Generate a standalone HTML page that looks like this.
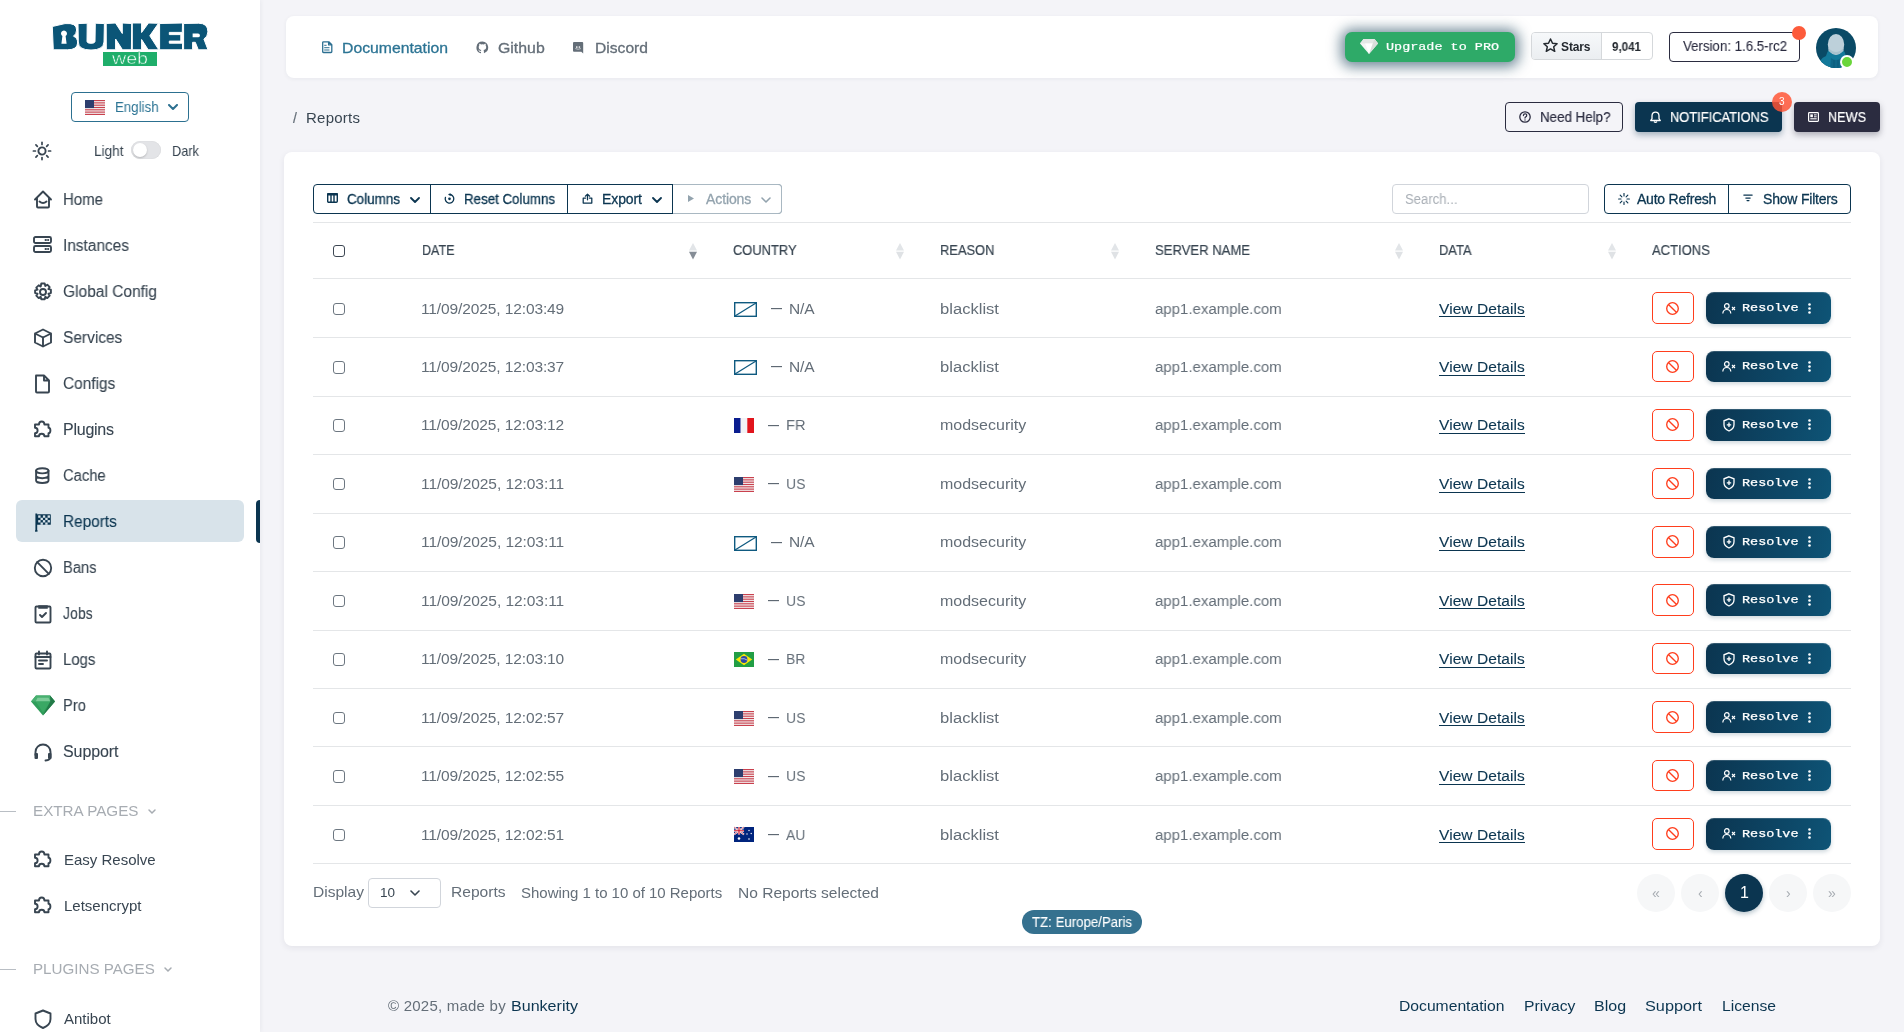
<!DOCTYPE html>
<html><head><meta charset="utf-8"><title>Reports</title>
<style>
html,body{margin:0;padding:0;}
body{width:1904px;height:1032px;overflow:hidden;position:relative;background:#f4f4f8;font-family:"Liberation Sans",sans-serif;}
.t{position:absolute;white-space:nowrap;will-change:transform;}
.r{position:absolute;box-sizing:border-box;}
svg.r{overflow:visible;will-change:transform;}
</style></head><body>
<div class="r" style="left:0px;top:0px;width:260px;height:1032px;background:#fff;box-shadow:1px 0 4px rgba(38,43,67,.06);"></div>
<svg class="r" style="left:52px;top:22px;" width="156" height="28" viewBox="0 0 156 28"><g fill="#0b5577" stroke="#fff" stroke-width="1" stroke-linejoin="round"><path d="M0.3 4.5L13 1.6Q24.8 0.6 24.6 8Q24.4 12.3 21.5 14.2Q25.8 16 25.6 21Q25.3 27.8 15.5 27.8L1.3 27.8Z"/><path d="M26 1.6L35.2 1.2L35 19.5Q35 21.3 39 21.3Q43 21.3 43 19.5L43.3 1.2L52.4 1.6L52 20Q51.5 28 39 28Q26.3 28 26.3 20Z"/><path d="M54.2 1.5L63.5 1L70.3 11.5L70.3 1L79.7 1.5L79.4 27.8L70.5 27.8L63.6 17L63.6 27.8L54.3 27.8Z"/><path d="M80.3 1L89.6 1L89.6 10.5L96.5 1L106.5 1.3L97.8 13.8L106.8 27.8L96.2 27.8L89.6 17.5L89.6 27.8L80.3 27.8Z"/><path d="M107.6 1.5L130.5 1L130.3 10.4L117.3 10.4L117.3 12.6L128.8 12.6L128.8 19.1L117.3 19.1L117.3 21.2L130.5 21.2L130.5 27.8L107.6 27.8Z"/><path d="M131.6 1.5L146.5 1.2Q156 1.2 155.9 9.8Q155.8 14.8 151.9 17L156 27.8L146.3 27.8L143.3 20.3L140.6 20.3L140.6 27.8L131.6 27.8Z"/></g><path d="M9 11.6a3 3 0 1 1 4.6 2.5L14.6 21.8H9.4L10.4 14.1A3 3 0 0 1 9 11.6z" fill="#fff"/><path d="M140.6 11.5L146 11.5A1.9 1.9 0 1 1 146 15.3L140.6 15.3Z" fill="#fff"/></svg>
<div class="r" style="left:103px;top:52px;width:54px;height:14px;background:#1fae6a;"></div>
<svg class="r" style="left:103px;top:52px;" width="54" height="14" viewBox="0 0 54 14"><text x="27" y="12.3" text-anchor="middle" font-family="Liberation Sans" font-size="16" fill="#fff" stroke="#1fae6a" stroke-width=".45" textLength="36" lengthAdjust="spacingAndGlyphs">web</text></svg>
<div class="r" style="left:71px;top:92px;width:118px;height:30px;border:1px solid #2c7090;border-radius:4px;background:#fff;"></div>
<svg class="r" style="left:85px;top:100px;" width="20" height="15" viewBox="0 0 20 15"><rect width="20" height="15" fill="#f4f4f4"/><rect x="0" y="0.000" width="20" height="1.154" fill="#c9414e"/><rect x="0" y="2.308" width="20" height="1.154" fill="#c9414e"/><rect x="0" y="4.615" width="20" height="1.154" fill="#c9414e"/><rect x="0" y="6.923" width="20" height="1.154" fill="#c9414e"/><rect x="0" y="9.231" width="20" height="1.154" fill="#c9414e"/><rect x="0" y="11.538" width="20" height="1.154" fill="#c9414e"/><rect x="0" y="13.846" width="20" height="1.154" fill="#c9414e"/><rect width="9.00" height="8.08" fill="#2d3e6e"/></svg>
<div class="t" style="left:114.50px;top:96.97px;font-size:14px;line-height:20px;color:#2c7494;font-weight:400;font-family:'Liberation Sans', sans-serif;letter-spacing:0.000px;transform:scaleX(0.9477);transform-origin:0 0;">English</div>
<svg class="r" style="left:168px;top:104px;" width="10" height="7" viewBox="0 0 10 7"><path d="M1 1l4 4 4-4" fill="none" stroke="#2c7090" stroke-width="2" stroke-linecap="round" stroke-linejoin="round"/></svg>
<svg class="r" style="left:33px;top:142px;" width="18" height="18" viewBox="0 0 18 18"><circle cx="9" cy="9" r="3.6" fill="none" stroke="#384551" stroke-width="1.9"/><path d="M15.60 9.00L17.60 9.00" stroke="#384551" stroke-width="1.7" stroke-linecap="round"/><path d="M13.67 13.67L15.08 15.08" stroke="#384551" stroke-width="1.7" stroke-linecap="round"/><path d="M9.00 15.60L9.00 17.60" stroke="#384551" stroke-width="1.7" stroke-linecap="round"/><path d="M4.33 13.67L2.92 15.08" stroke="#384551" stroke-width="1.7" stroke-linecap="round"/><path d="M2.40 9.00L0.40 9.00" stroke="#384551" stroke-width="1.7" stroke-linecap="round"/><path d="M4.33 4.33L2.92 2.92" stroke="#384551" stroke-width="1.7" stroke-linecap="round"/><path d="M9.00 2.40L9.00 0.40" stroke="#384551" stroke-width="1.7" stroke-linecap="round"/><path d="M13.67 4.33L15.08 2.92" stroke="#384551" stroke-width="1.7" stroke-linecap="round"/></svg>
<div class="t" style="left:93.50px;top:141.36px;font-size:14.5px;line-height:20px;color:#384551;font-weight:400;font-family:'Liberation Sans', sans-serif;letter-spacing:0.000px;transform:scaleX(0.9380);transform-origin:0 0;">Light</div>
<div class="r" style="left:131px;top:141px;width:30px;height:18px;background:#e3e4e7;border-radius:9px;box-shadow:inset 0 0 1px rgba(0,0,0,.15);"></div>
<div class="r" style="left:133px;top:143px;width:14px;height:14px;background:#fff;border-radius:50%;box-shadow:0 1px 2px rgba(0,0,0,.2);"></div>
<div class="t" style="left:171.50px;top:141.36px;font-size:14.5px;line-height:20px;color:#384551;font-weight:400;font-family:'Liberation Sans', sans-serif;letter-spacing:0.000px;transform:scaleX(0.8809);transform-origin:0 0;">Dark</div>
<div class="r" style="left:16px;top:500px;width:228px;height:42px;background:#d8e3ea;border-radius:6px;"></div>
<div class="r" style="left:256px;top:500px;width:4px;height:43px;background:#0b3550;border-radius:4px 0 0 4px;"></div>
<svg class="r" style="left:33px;top:190.0px;" width="20" height="20" viewBox="0 0 20 20"><path d="M2 9.5L10 1.5 18 9.5M4 8v8.5q0 1 1 1h10q1 0 1-1V8M6.5 11.5q3.5 3 7 0" fill="none" stroke="#384551" stroke-width="1.9" stroke-linecap="round" stroke-linejoin="round"/></svg>
<div class="t" style="left:62.80px;top:188.86px;font-size:16px;line-height:22px;color:#384551;font-weight:400;font-family:'Liberation Sans', sans-serif;letter-spacing:0.000px;transform:scaleX(0.9368);transform-origin:0 0;-webkit-text-stroke:0.10px #384551;">Home</div>
<svg class="r" style="left:33px;top:236.0px;" width="20" height="20" viewBox="0 0 20 20"><rect x="1" y="1" width="17" height="6" rx="1.5" fill="none" stroke="#384551" stroke-width="1.9" stroke-linecap="round" stroke-linejoin="round"/><rect x="1" y="10" width="17" height="6" rx="1.5" fill="none" stroke="#384551" stroke-width="1.9" stroke-linecap="round" stroke-linejoin="round"/><path d="M12.5 4h.5M15 4h.3M12.5 13h.5M15 13h.3" fill="none" stroke="#384551" stroke-width="1.9" stroke-linecap="round" stroke-linejoin="round"/></svg>
<div class="t" style="left:62.80px;top:234.86px;font-size:16px;line-height:22px;color:#384551;font-weight:400;font-family:'Liberation Sans', sans-serif;letter-spacing:0.000px;transform:scaleX(0.9635);transform-origin:0 0;-webkit-text-stroke:0.10px #384551;">Instances</div>
<svg class="r" style="left:33px;top:282.0px;" width="20" height="20" viewBox="0 0 20 20"><circle cx="10" cy="10" r="3" fill="none" stroke="#384551" stroke-width="1.9" stroke-linecap="round" stroke-linejoin="round"/><path d="M8.3 1.5h3.4l.6 2.5 2-1.3 2.4 2.4-1.3 2 2.5.6v3.4l-2.5.6 1.3 2-2.4 2.4-2-1.3-.6 2.5H8.3l-.6-2.5-2 1.3-2.4-2.4 1.3-2-2.5-.6V8.3l2.5-.6-1.3-2 2.4-2.4 2 1.3z" fill="none" stroke="#384551" stroke-width="1.9" stroke-linecap="round" stroke-linejoin="round"/></svg>
<div class="t" style="left:62.80px;top:280.86px;font-size:16px;line-height:22px;color:#384551;font-weight:400;font-family:'Liberation Sans', sans-serif;letter-spacing:0.000px;transform:scaleX(0.9696);transform-origin:0 0;-webkit-text-stroke:0.10px #384551;">Global Config</div>
<svg class="r" style="left:33px;top:328.0px;" width="20" height="20" viewBox="0 0 20 20"><path d="M10 1.5l8 4v9l-8 4-8-4v-9zM2 5.5l8 4 8-4M10 9.5v9" fill="none" stroke="#384551" stroke-width="1.9" stroke-linecap="round" stroke-linejoin="round"/></svg>
<div class="t" style="left:62.80px;top:326.86px;font-size:16px;line-height:22px;color:#384551;font-weight:400;font-family:'Liberation Sans', sans-serif;letter-spacing:0.000px;transform:scaleX(0.9666);transform-origin:0 0;-webkit-text-stroke:0.10px #384551;">Services</div>
<svg class="r" style="left:33px;top:374.0px;" width="20" height="20" viewBox="0 0 20 20"><path d="M3 1.5h8l5 5v11q0 1-1 1H4q-1 0-1-1v-15q0-1 1-1zM11 1.5v5h5" fill="none" stroke="#384551" stroke-width="1.9" stroke-linecap="round" stroke-linejoin="round"/></svg>
<div class="t" style="left:62.80px;top:372.86px;font-size:16px;line-height:22px;color:#384551;font-weight:400;font-family:'Liberation Sans', sans-serif;letter-spacing:0.000px;transform:scaleX(0.9641);transform-origin:0 0;-webkit-text-stroke:0.10px #384551;">Configs</div>
<svg class="r" style="left:33px;top:420.0px;" width="20" height="20" viewBox="0 0 20 20"><path d="M2 4.5H6Q6 1.5 8.7 1.5Q11.4 1.5 11.4 4.5H15.5V7.8Q17.4 7.8 17.4 10.5Q17.4 13.2 15.5 13.2V16.3H11.4Q11.4 13.8 8.7 13.8Q6 13.8 6 16.3H2V13.2Q4.6 13.2 4.6 10.5Q4.6 7.8 2 7.8Z" fill="none" stroke="#384551" stroke-width="1.9" stroke-linecap="round" stroke-linejoin="round"/></svg>
<div class="t" style="left:62.80px;top:418.86px;font-size:16px;line-height:22px;color:#384551;font-weight:400;font-family:'Liberation Sans', sans-serif;letter-spacing:-0.250px;-webkit-text-stroke:0.10px #384551;">Plugins</div>
<svg class="r" style="left:33px;top:466.0px;" width="20" height="20" viewBox="0 0 20 20"><ellipse cx="9.3" cy="4.8" rx="6.2" ry="2.6" fill="none" stroke="#384551" stroke-width="1.9" stroke-linecap="round" stroke-linejoin="round"/><path d="M3.1 4.8v9.6c0 1.4 2.8 2.6 6.2 2.6s6.2-1.2 6.2-2.6V4.8M3.1 9.6c0 1.4 2.8 2.6 6.2 2.6s6.2-1.2 6.2-2.6" fill="none" stroke="#384551" stroke-width="1.9" stroke-linecap="round" stroke-linejoin="round"/></svg>
<div class="t" style="left:62.80px;top:464.86px;font-size:16px;line-height:22px;color:#384551;font-weight:400;font-family:'Liberation Sans', sans-serif;letter-spacing:0.000px;transform:scaleX(0.9232);transform-origin:0 0;-webkit-text-stroke:0.10px #384551;">Cache</div>
<svg class="r" style="left:33px;top:512.0px;" width="20" height="20" viewBox="0 0 20 20"><path d="M3.3 1.5v17.5" stroke="#0b3550" stroke-width="1.8"/><path d="M2 19h2.5" stroke="#0b3550" stroke-width="1.4"/><rect x="4" y="2.2" width="13.8" height="10.6" rx=".6" fill="#0b3550"/><rect x="5.20" y="3.40" width="2.35" height="2.35" fill="#d8e3ea"/><rect x="5.20" y="8.10" width="2.35" height="2.35" fill="#d8e3ea"/><rect x="7.55" y="5.75" width="2.35" height="2.35" fill="#d8e3ea"/><rect x="7.55" y="10.45" width="2.35" height="2.35" fill="#d8e3ea"/><rect x="9.90" y="3.40" width="2.35" height="2.35" fill="#d8e3ea"/><rect x="9.90" y="8.10" width="2.35" height="2.35" fill="#d8e3ea"/><rect x="12.25" y="5.75" width="2.35" height="2.35" fill="#d8e3ea"/><rect x="12.25" y="10.45" width="2.35" height="2.35" fill="#d8e3ea"/><rect x="14.60" y="3.40" width="2.35" height="2.35" fill="#d8e3ea"/><rect x="14.60" y="8.10" width="2.35" height="2.35" fill="#d8e3ea"/></svg>
<div class="t" style="left:62.80px;top:510.86px;font-size:16px;line-height:22px;color:#0b3550;font-weight:400;font-family:'Liberation Sans', sans-serif;letter-spacing:0.000px;transform:scaleX(0.9607);transform-origin:0 0;-webkit-text-stroke:0.10px #0b3550;">Reports</div>
<svg class="r" style="left:33px;top:558.0px;" width="20" height="20" viewBox="0 0 20 20"><circle cx="10" cy="10" r="8.2" fill="none" stroke="#384551" stroke-width="1.9" stroke-linecap="round" stroke-linejoin="round"/><path d="M4.2 4.2l11.6 11.6" fill="none" stroke="#384551" stroke-width="1.9" stroke-linecap="round" stroke-linejoin="round"/></svg>
<div class="t" style="left:62.80px;top:556.86px;font-size:16px;line-height:22px;color:#384551;font-weight:400;font-family:'Liberation Sans', sans-serif;letter-spacing:0.000px;transform:scaleX(0.9191);transform-origin:0 0;-webkit-text-stroke:0.10px #384551;">Bans</div>
<svg class="r" style="left:33px;top:604.0px;" width="20" height="20" viewBox="0 0 20 20"><rect x="2.5" y="2.5" width="15" height="16" rx="1" fill="none" stroke="#384551" stroke-width="1.9" stroke-linecap="round" stroke-linejoin="round"/><path d="M6 2h8v2H6z" fill="#384551" stroke="#384551" stroke-width="1.5"/><path d="M7 11l2 2 4-4" fill="none" stroke="#384551" stroke-width="1.9" stroke-linecap="round" stroke-linejoin="round"/></svg>
<div class="t" style="left:62.80px;top:602.86px;font-size:16px;line-height:22px;color:#384551;font-weight:400;font-family:'Liberation Sans', sans-serif;letter-spacing:0.000px;transform:scaleX(0.8787);transform-origin:0 0;-webkit-text-stroke:0.10px #384551;">Jobs</div>
<svg class="r" style="left:33px;top:650.0px;" width="20" height="20" viewBox="0 0 20 20"><rect x="2.5" y="3.5" width="15" height="15" rx="1" fill="none" stroke="#384551" stroke-width="1.9" stroke-linecap="round" stroke-linejoin="round"/><path d="M6 1.5v3M14 1.5v3M2.5 7h15M6 10.5h8M6 14h4" fill="none" stroke="#384551" stroke-width="1.9" stroke-linecap="round" stroke-linejoin="round"/></svg>
<div class="t" style="left:62.80px;top:648.86px;font-size:16px;line-height:22px;color:#384551;font-weight:400;font-family:'Liberation Sans', sans-serif;letter-spacing:0.000px;transform:scaleX(0.9308);transform-origin:0 0;-webkit-text-stroke:0.10px #384551;">Logs</div>
<svg class="r" style="left:33px;top:696.0px;" width="20" height="20" viewBox="0 0 20 20"><g transform="translate(-2,-0.5)"><path d="M5 0h14l5 6-12 14L0 6z" fill="#2f9d5a"/><path d="M5 0h14l5 6H0z" fill="#48b070"/><path d="M6.5 2.2h11l1.8 3.8H4.7z" fill="#7ccb98"/><path d="M4.7 6h14.6L12 17z" fill="#3aa864"/><path d="M19 0l5 6-12 14 7.3-14z" fill="#237a48"/></g></svg>
<div class="t" style="left:62.80px;top:694.86px;font-size:16px;line-height:22px;color:#384551;font-weight:400;font-family:'Liberation Sans', sans-serif;letter-spacing:0.000px;transform:scaleX(0.9197);transform-origin:0 0;-webkit-text-stroke:0.10px #384551;">Pro</div>
<svg class="r" style="left:33px;top:742.0px;" width="20" height="20" viewBox="0 0 20 20"><path d="M2.5 13v-3a7.5 7.5 0 0 1 15 0v3M17.5 13v2q0 3-5 3.5" fill="none" stroke="#384551" stroke-width="1.9" stroke-linecap="round" stroke-linejoin="round"/><rect x="1.5" y="11" width="3.5" height="6" rx="1" fill="#384551"/><rect x="15" y="11" width="3.5" height="6" rx="1" fill="#384551"/></svg>
<div class="t" style="left:62.80px;top:740.86px;font-size:16px;line-height:22px;color:#384551;font-weight:400;font-family:'Liberation Sans', sans-serif;letter-spacing:-0.092px;-webkit-text-stroke:0.10px #384551;">Support</div>
<div class="r" style="left:0px;top:811px;width:16px;height:1px;background:#b9bec4;"></div>
<div class="t" style="left:32.50px;top:800.86px;font-size:14.5px;line-height:20px;color:#a7acb2;font-weight:400;font-family:'Liberation Sans', sans-serif;letter-spacing:0.000px;transform:scaleX(1.0503);transform-origin:0 0;">EXTRA PAGES</div>
<svg class="r" style="left:147.5px;top:808.9px;" width="8" height="5" viewBox="0 0 8 5"><path d="M1 1l3 3 3-3" fill="none" stroke="#a7acb2" stroke-width="1.5" stroke-linecap="round"/></svg>
<svg class="r" style="left:33px;top:850px;" width="20" height="20" viewBox="0 0 20 20"><path d="M2 4.5H6Q6 1.5 8.7 1.5Q11.4 1.5 11.4 4.5H15.5V7.8Q17.4 7.8 17.4 10.5Q17.4 13.2 15.5 13.2V16.3H11.4Q11.4 13.8 8.7 13.8Q6 13.8 6 16.3H2V13.2Q4.6 13.2 4.6 10.5Q4.6 7.8 2 7.8Z" fill="none" stroke="#384551" stroke-width="1.9" stroke-linecap="round" stroke-linejoin="round"/></svg>
<div class="t" style="left:63.50px;top:849.16px;font-size:15px;line-height:21px;color:#384551;font-weight:400;font-family:'Liberation Sans', sans-serif;letter-spacing:0.000px;">Easy Resolve</div>
<svg class="r" style="left:33px;top:896px;" width="20" height="20" viewBox="0 0 20 20"><path d="M2 4.5H6Q6 1.5 8.7 1.5Q11.4 1.5 11.4 4.5H15.5V7.8Q17.4 7.8 17.4 10.5Q17.4 13.2 15.5 13.2V16.3H11.4Q11.4 13.8 8.7 13.8Q6 13.8 6 16.3H2V13.2Q4.6 13.2 4.6 10.5Q4.6 7.8 2 7.8Z" fill="none" stroke="#384551" stroke-width="1.9" stroke-linecap="round" stroke-linejoin="round"/></svg>
<div class="t" style="left:63.50px;top:895.16px;font-size:15px;line-height:21px;color:#384551;font-weight:400;font-family:'Liberation Sans', sans-serif;letter-spacing:0.000px;">Letsencrypt</div>
<div class="r" style="left:0px;top:969px;width:16px;height:1px;background:#b9bec4;"></div>
<div class="t" style="left:32.50px;top:958.76px;font-size:14.5px;line-height:20px;color:#a7acb2;font-weight:400;font-family:'Liberation Sans', sans-serif;letter-spacing:0.000px;transform:scaleX(1.0450);transform-origin:0 0;">PLUGINS PAGES</div>
<svg class="r" style="left:163.8px;top:966.8px;" width="8" height="5" viewBox="0 0 8 5"><path d="M1 1l3 3 3-3" fill="none" stroke="#a7acb2" stroke-width="1.5" stroke-linecap="round"/></svg>
<svg class="r" style="left:33px;top:1009px;" width="20" height="20" viewBox="0 0 20 20"><path d="M10 1.5l7.5 3v5.5q0 6-7.5 9-7.5-3-7.5-9V4.5z" fill="none" stroke="#384551" stroke-width="1.9" stroke-linecap="round" stroke-linejoin="round"/></svg>
<div class="t" style="left:63.50px;top:1008.06px;font-size:15px;line-height:21px;color:#384551;font-weight:400;font-family:'Liberation Sans', sans-serif;letter-spacing:0.000px;">Antibot</div>
<div class="r" style="left:286px;top:16px;width:1592px;height:62px;background:#fff;border-radius:8px;box-shadow:0 1px 4px rgba(38,43,67,.06);"></div>
<svg class="r" style="left:321.5px;top:41px;" width="10.5" height="12" viewBox="0 0 10.5 12"><path d="M1.5 .8h5.3l3 3v6.9q0 .8-.8.8H1.5q-.8 0-.8-.8V1.6q0-.8.8-.8zM6.6 1v2.9h2.9" fill="none" stroke="#2c6f91" stroke-width="1.3" stroke-linejoin="round"/><path d="M2.6 4.3h1.6M2.6 6.7h4.5M2.6 9h4.5" stroke="#2c6f91" stroke-width="1" stroke-linecap="round"/></svg>
<div class="t" style="left:342.40px;top:37.36px;font-size:15px;line-height:21px;color:#2c7494;font-weight:400;font-family:'Liberation Sans', sans-serif;letter-spacing:0.000px;transform:scaleX(1.0505);transform-origin:0 0;-webkit-text-stroke:0.30px #2c7494;">Documentation</div>
<svg class="r" style="left:476px;top:41px;" width="13" height="13" viewBox="0 0 13 13"><path d="M6.5 0.5a6 6 0 0 0-1.9 11.7c.3 0 .4-.1.4-.3v-1.1c-1.7.4-2-.8-2-.8-.3-.7-.7-.9-.7-.9-.5-.4 0-.4 0-.4.6 0 .9.6.9.6.5.9 1.4.7 1.8.5 0-.4.2-.7.4-.8-1.3-.2-2.7-.7-2.7-3 0-.7.2-1.2.6-1.6 0-.2-.3-.8.1-1.6 0 0 .5-.2 1.6.6a5.7 5.7 0 0 1 3 0c1.1-.8 1.6-.6 1.6-.6.3.8.1 1.4 0 1.6.4.4.6 1 .6 1.6 0 2.3-1.4 2.8-2.7 3 .2.2.4.6.4 1.1v1.7c0 .2.1.4.4.3A6 6 0 0 0 6.5.5z" fill="#646e78"/></svg>
<div class="t" style="left:498.30px;top:37.36px;font-size:15px;line-height:21px;color:#646e78;font-weight:400;font-family:'Liberation Sans', sans-serif;letter-spacing:0.000px;transform:scaleX(1.0566);transform-origin:0 0;-webkit-text-stroke:0.30px #646e78;">Github</div>
<svg class="r" style="left:573.3px;top:42px;" width="10.2" height="11.5" viewBox="0 0 10.2 11.5"><path d="M1 0h8.2q1 0 1 1v10.5L8.3 9.8H1q-1 0-1-1V1q0-1 1-1z" fill="#646e78"/><path d="M2.3 6.6q2.8 1.3 5.6 0" fill="none" stroke="#fff" stroke-width=".6"/><circle cx="3.8" cy="5" r=".85" fill="#fff"/><circle cx="6.4" cy="5" r=".85" fill="#fff"/></svg>
<div class="t" style="left:594.60px;top:37.36px;font-size:15px;line-height:21px;color:#646e78;font-weight:400;font-family:'Liberation Sans', sans-serif;letter-spacing:0.000px;transform:scaleX(1.0423);transform-origin:0 0;-webkit-text-stroke:0.30px #646e78;">Discord</div>
<div class="r" style="left:1345px;top:32px;width:170px;height:30px;background:#2eaa68;border-radius:7px;box-shadow:0 1px 13px 4px rgba(11,53,80,.58);"></div>
<svg class="r" style="left:1360px;top:38px;" width="18" height="17" viewBox="0 0 18 17"><path d="M3.5 1h11L18 5.5 9 16 0 5.5z" fill="#f4f6f5"/><path d="M3.5 1h11L18 5.5H0z" fill="#e4e8e6"/><path d="M5.2 5.5L9 16l3.8-10.5z" fill="#ffffff"/><path d="M14.5 1L18 5.5 9 16l3.8-10.5z" fill="#d9dedb"/></svg>
<div class="t" style="left:1386.00px;top:38.97px;font-size:11.5px;line-height:16px;color:#fff;font-weight:400;font-family:'Liberation Mono', monospace;letter-spacing:0.000px;transform:scaleX(1.1698);transform-origin:0 0;-webkit-text-stroke:0.20px #fff;">Upgrade to PRO</div>
<div class="r" style="left:1531px;top:32px;width:122px;height:28px;border:1px solid #d5d8db;border-radius:4px;background:#fff;"></div>
<div class="r" style="left:1532px;top:33px;width:70px;height:26px;background:linear-gradient(#f6f8fa,#ebeef1);border-radius:3px 0 0 3px;border-right:1px solid #d5d8db;"></div>
<svg class="r" style="left:1542.5px;top:38px;" width="15" height="14.5" viewBox="0 0 15 14.5"><path d="M7.5 1l2 4.2 4.6.5-3.4 3.1 1 4.5-4.2-2.4-4.2 2.4 1-4.5L.9 5.7l4.6-.5z" fill="none" stroke="#24292f" stroke-width="1.5" stroke-linejoin="round"/></svg>
<div class="t" style="left:1561.00px;top:38.87px;font-size:12px;line-height:17px;color:#24292f;font-weight:700;font-family:'Liberation Sans', sans-serif;letter-spacing:-0.125px;">Stars</div>
<div class="t" style="left:1612.00px;top:38.87px;font-size:12px;line-height:17px;color:#24292f;font-weight:700;font-family:'Liberation Sans', sans-serif;letter-spacing:0.000px;transform:scaleX(0.9651);transform-origin:0 0;">9,041</div>
<div class="r" style="left:1669px;top:32px;width:131px;height:30px;border:1.3px solid #2b2c40;border-radius:4px;background:#fff;"></div>
<div class="t" style="left:1682.50px;top:36.27px;font-size:14px;line-height:20px;color:#2b2c40;font-weight:400;font-family:'Liberation Sans', sans-serif;letter-spacing:0.000px;transform:scaleX(0.9480);transform-origin:0 0;-webkit-text-stroke:0.10px #2b2c40;">Version: 1.6.5-rc2</div>
<div class="r" style="left:1792px;top:26px;width:14px;height:14px;background:#fd5b3b;border-radius:50%;"></div>
<svg class="r" style="left:1816px;top:28px;" width="40" height="40" viewBox="0 0 40 40"><defs><clipPath id="av"><circle cx="20" cy="20" r="20"/></clipPath></defs><circle cx="20" cy="20" r="20" fill="#0a4a66"/><g clip-path="url(#av)"><path d="M2 42q0-11 8-14 2-9 10-10 8 1 10 10 8 3 8 14z" fill="#13799a"/><path d="M15 30q5 4 10 0l1 12H14z" fill="#0f6788"/><path d="M18 32v10M22 32v10" stroke="#0b5a78" stroke-width="1"/><ellipse cx="20" cy="16.5" rx="8.2" ry="10.5" fill="#bdd0da"/><path d="M12.5 20q7.5 8 15 0v3q-7.5 7-15 0z" fill="#a9c2ce"/></g></svg>
<div class="r" style="left:1840px;top:55px;width:14px;height:14px;background:#6ad63a;border-radius:50%;border:2.5px solid #fff;"></div>
<div class="t" style="left:292.50px;top:107.77px;font-size:14px;line-height:20px;color:#646e78;font-weight:400;font-family:'Liberation Sans', sans-serif;letter-spacing:0.000px;-webkit-text-stroke:0.20px #646e78;">/</div>
<div class="t" style="left:305.60px;top:107.26px;font-size:15px;line-height:21px;color:#384551;font-weight:400;font-family:'Liberation Sans', sans-serif;letter-spacing:0.250px;">Reports</div>
<div class="r" style="left:1505px;top:102px;width:118px;height:30px;border:1.3px solid #2b2c40;border-radius:4px;background:transparent;"></div>
<svg class="r" style="left:1519px;top:111px;" width="12" height="12" viewBox="0 0 12 12"><circle cx="6" cy="6" r="5.2" fill="none" stroke="#2b2c40" stroke-width="1.3"/><path d="M4.4 4.6q0-1.8 1.7-1.8t1.6 1.6q0 1-1 1.5-.7.3-.7 1.2" fill="none" stroke="#2b2c40" stroke-width="1.2" stroke-linecap="round"/><circle cx="6" cy="9" r=".7" fill="#2b2c40"/></svg>
<div class="t" style="left:1539.60px;top:106.97px;font-size:14px;line-height:20px;color:#2b2c40;font-weight:400;font-family:'Liberation Sans', sans-serif;letter-spacing:0.000px;transform:scaleX(0.9533);transform-origin:0 0;-webkit-text-stroke:0.20px #2b2c40;">Need Help?</div>
<div class="r" style="left:1635px;top:102px;width:147px;height:30px;background:#0b3550;border-radius:4px;box-shadow:0 3px 6px rgba(11,53,80,.35);"></div>
<svg class="r" style="left:1650px;top:111px;" width="11" height="12" viewBox="0 0 11 12"><path d="M5.5 1.2q3.3 0 3.5 3.6v2.8l1.3 1.9H.7L2 7.6V4.8q.2-3.6 3.5-3.6zM4 10.6q1.5 1.6 3 0" fill="none" stroke="#fff" stroke-width="1.3" stroke-linejoin="round"/></svg>
<div class="t" style="left:1669.70px;top:106.97px;font-size:14px;line-height:20px;color:#fff;font-weight:400;font-family:'Liberation Sans', sans-serif;letter-spacing:0.000px;transform:scaleX(0.9201);transform-origin:0 0;-webkit-text-stroke:0.20px #fff;">NOTIFICATIONS</div>
<div class="r" style="left:1772px;top:92px;width:20px;height:20px;background:rgba(255,84,52,.84);border-radius:50%;"></div>
<div class="t" style="left:1779.22px;top:95.47px;font-size:10px;line-height:14px;color:#fff;font-weight:400;font-family:'Liberation Sans', sans-serif;letter-spacing:0.000px;">3</div>
<div class="r" style="left:1794px;top:102px;width:86px;height:30px;background:#2b2c40;border-radius:4px;box-shadow:0 3px 6px rgba(43,44,64,.35);"></div>
<svg class="r" style="left:1808px;top:112px;" width="11" height="10" viewBox="0 0 11 10"><rect x=".6" y=".6" width="9.8" height="8.8" rx=".8" fill="none" stroke="#fff" stroke-width="1.2"/><path d="M2.3 6.8h6.4" stroke="#fff" stroke-width="1.1"/><rect x="2.3" y="2.4" width="2.6" height="2.8" fill="#fff"/><path d="M6 2.9h2.7M6 4.8h2.7" stroke="#fff" stroke-width="1"/></svg>
<div class="t" style="left:1828.40px;top:106.97px;font-size:14px;line-height:20px;color:#fff;font-weight:400;font-family:'Liberation Sans', sans-serif;letter-spacing:0.000px;transform:scaleX(0.9048);transform-origin:0 0;-webkit-text-stroke:0.20px #fff;">NEWS</div>
<div class="r" style="left:284px;top:152px;width:1596px;height:794px;background:#fff;border-radius:8px;box-shadow:0 2px 6px rgba(38,43,67,.08);"></div>
<div class="r" style="left:313px;top:184px;width:469px;height:30px;border:1px solid #0b3550;border-radius:4px;"></div>
<div class="r" style="left:672px;top:184px;width:110px;height:30px;border:1px solid #a9b8c2;border-left:none;border-radius:0 4px 4px 0;background:#fff;"></div>
<div class="r" style="left:430px;top:184px;width:1px;height:30px;background:#0b3550;"></div>
<div class="r" style="left:567px;top:184px;width:1px;height:30px;background:#0b3550;"></div>
<div class="r" style="left:672px;top:184px;width:1px;height:30px;background:#0b3550;"></div>
<svg class="r" style="left:327px;top:193px;" width="11" height="10" viewBox="0 0 11 10"><rect x=".7" y=".7" width="9.6" height="8.6" rx="1" fill="none" stroke="#0b3550" stroke-width="1.4"/><rect x="0" y="0" width="11" height="2.6" rx="1" fill="#0b3550"/><path d="M4 2v7.5M7 2v7.5" stroke="#0b3550" stroke-width="1.4"/></svg>
<div class="t" style="left:347.00px;top:188.97px;font-size:14px;line-height:20px;color:#0b3550;font-weight:400;font-family:'Liberation Sans', sans-serif;letter-spacing:0.000px;transform:scaleX(0.9593);transform-origin:0 0;-webkit-text-stroke:0.30px #0b3550;">Columns</div>
<svg class="r" style="left:410px;top:196.5px;" width="10" height="7" viewBox="0 0 10 7"><path d="M1 1l4 4 4-4" fill="none" stroke="#0b3550" stroke-width="1.8" stroke-linecap="round" stroke-linejoin="round"/></svg>
<svg class="r" style="left:444px;top:193px;" width="11" height="11" viewBox="0 0 11 11"><path d="M5.13 1.52A4.3 4.3 0 1 1 1.46 4.33" fill="none" stroke="#0b3550" stroke-width="1.3" stroke-linecap="round"/><path d="M6.6 .2L4.4 1.6 6.6 3z" fill="#0b3550"/><circle cx="5.5" cy="5.8" r="1.35" fill="#0b3550"/></svg>
<div class="t" style="left:464.40px;top:188.97px;font-size:14px;line-height:20px;color:#0b3550;font-weight:400;font-family:'Liberation Sans', sans-serif;letter-spacing:0.000px;transform:scaleX(0.9509);transform-origin:0 0;-webkit-text-stroke:0.30px #0b3550;">Reset Columns</div>
<svg class="r" style="left:582px;top:193px;" width="11" height="11" viewBox="0 0 11 11"><path d="M5.5 1.2v5.6M3.4 3.2L5.5 1.1 7.6 3.2M3.6 5H1.2v5h8.6V5H7.4" fill="none" stroke="#0b3550" stroke-width="1.25" stroke-linecap="round" stroke-linejoin="round"/></svg>
<div class="t" style="left:601.50px;top:188.97px;font-size:14px;line-height:20px;color:#0b3550;font-weight:400;font-family:'Liberation Sans', sans-serif;letter-spacing:-0.090px;-webkit-text-stroke:0.30px #0b3550;">Export</div>
<svg class="r" style="left:652px;top:196.5px;" width="10" height="7" viewBox="0 0 10 7"><path d="M1 1l4 4 4-4" fill="none" stroke="#0b3550" stroke-width="1.8" stroke-linecap="round" stroke-linejoin="round"/></svg>
<svg class="r" style="left:688px;top:195px;" width="6" height="7" viewBox="0 0 6 7"><path d="M0 0l6 3.5L0 7z" fill="#93a3ae"/></svg>
<div class="t" style="left:706.00px;top:188.97px;font-size:14px;line-height:20px;color:#93a3ae;font-weight:400;font-family:'Liberation Sans', sans-serif;letter-spacing:-0.100px;-webkit-text-stroke:0.30px #93a3ae;">Actions</div>
<svg class="r" style="left:761px;top:196.5px;" width="10" height="7" viewBox="0 0 10 7"><path d="M1 1l4 4 4-4" fill="none" stroke="#93a3ae" stroke-width="1.6" stroke-linecap="round" stroke-linejoin="round"/></svg>
<div class="r" style="left:1392px;top:184px;width:197px;height:30px;border:1px solid #d1d5db;border-radius:4px;background:#fff;"></div>
<div class="t" style="left:1405.00px;top:189.27px;font-size:14px;line-height:20px;color:#a9afb6;font-weight:400;font-family:'Liberation Sans', sans-serif;letter-spacing:0.000px;transform:scaleX(0.9367);transform-origin:0 0;">Search...</div>
<div class="r" style="left:1604px;top:184px;width:247px;height:30px;border:1px solid #0b3550;border-radius:4px;"></div>
<div class="r" style="left:1728px;top:184px;width:1px;height:30px;background:#0b3550;"></div>
<svg class="r" style="left:1618px;top:192.5px;" width="12" height="12" viewBox="0 0 12 12"><path d="M9.00 6.00L11.40 6.00" stroke="#0b3550" stroke-width="1.15" stroke-linecap="round"/><path d="M8.12 8.12L9.82 9.82" stroke="#0b3550" stroke-width="1.15" stroke-linecap="round"/><path d="M6.00 9.00L6.00 11.40" stroke="#0b3550" stroke-width="1.15" stroke-linecap="round"/><path d="M3.88 8.12L2.18 9.82" stroke="#0b3550" stroke-width="1.15" stroke-linecap="round"/><path d="M3.00 6.00L0.60 6.00" stroke="#0b3550" stroke-width="1.15" stroke-linecap="round"/><path d="M3.88 3.88L2.18 2.18" stroke="#0b3550" stroke-width="1.15" stroke-linecap="round"/><path d="M6.00 3.00L6.00 0.60" stroke="#0b3550" stroke-width="1.15" stroke-linecap="round"/><path d="M8.12 3.88L9.82 2.18" stroke="#0b3550" stroke-width="1.15" stroke-linecap="round"/></svg>
<div class="t" style="left:1637.00px;top:188.97px;font-size:14px;line-height:20px;color:#0b3550;font-weight:400;font-family:'Liberation Sans', sans-serif;letter-spacing:-0.218px;-webkit-text-stroke:0.30px #0b3550;">Auto Refresh</div>
<svg class="r" style="left:1743px;top:194px;" width="10" height="8" viewBox="0 0 10 8"><path d="M.8 1.1h8.4M2.8 4.1h4.4M4 6.6h2" stroke="#0b3550" stroke-width="1.1" stroke-linecap="round"/></svg>
<div class="t" style="left:1762.50px;top:188.97px;font-size:14px;line-height:20px;color:#0b3550;font-weight:400;font-family:'Liberation Sans', sans-serif;letter-spacing:-0.200px;-webkit-text-stroke:0.30px #0b3550;">Show Filters</div>
<div class="r" style="left:313px;top:222px;width:1538px;height:1px;background:#e4e6e8;"></div>
<div class="r" style="left:313px;top:278px;width:1538px;height:1px;background:#e4e6e8;"></div>
<div class="r" style="left:332.8px;top:245px;width:12.5px;height:12px;border:1.3px solid #3d4753;border-radius:3px;background:#fff;"></div>
<svg class="r" style="left:689px;top:243.3px;" width="8" height="17" viewBox="0 0 8 17"><path d="M4 0L8 7.5H0z" fill="#e2e5e8"/><path d="M0 8.7H8L4 16.4z" fill="#858d96"/></svg>
<svg class="r" style="left:895.6px;top:243.3px;" width="8" height="17" viewBox="0 0 8 17"><path d="M4 0L8 7.5H0z" fill="#e2e5e8"/><path d="M0 8.7H8L4 16.4z" fill="#dfe2e5"/></svg>
<svg class="r" style="left:1110.6px;top:243.3px;" width="8" height="17" viewBox="0 0 8 17"><path d="M4 0L8 7.5H0z" fill="#e2e5e8"/><path d="M0 8.7H8L4 16.4z" fill="#dfe2e5"/></svg>
<svg class="r" style="left:1395px;top:243.3px;" width="8" height="17" viewBox="0 0 8 17"><path d="M4 0L8 7.5H0z" fill="#e2e5e8"/><path d="M0 8.7H8L4 16.4z" fill="#dfe2e5"/></svg>
<svg class="r" style="left:1607.8px;top:243.3px;" width="8" height="17" viewBox="0 0 8 17"><path d="M4 0L8 7.5H0z" fill="#e2e5e8"/><path d="M0 8.7H8L4 16.4z" fill="#dfe2e5"/></svg>
<div class="t" style="left:421.50px;top:240.27px;font-size:14px;line-height:20px;color:#384551;font-weight:400;font-family:'Liberation Sans', sans-serif;letter-spacing:0.000px;transform:scaleX(0.8953);transform-origin:0 0;-webkit-text-stroke:0.20px #384551;">DATE</div>
<div class="t" style="left:733.00px;top:240.27px;font-size:14px;line-height:20px;color:#384551;font-weight:400;font-family:'Liberation Sans', sans-serif;letter-spacing:0.000px;transform:scaleX(0.9210);transform-origin:0 0;-webkit-text-stroke:0.20px #384551;">COUNTRY</div>
<div class="t" style="left:940.00px;top:240.27px;font-size:14px;line-height:20px;color:#384551;font-weight:400;font-family:'Liberation Sans', sans-serif;letter-spacing:0.000px;transform:scaleX(0.9214);transform-origin:0 0;-webkit-text-stroke:0.20px #384551;">REASON</div>
<div class="t" style="left:1155.00px;top:240.27px;font-size:14px;line-height:20px;color:#384551;font-weight:400;font-family:'Liberation Sans', sans-serif;letter-spacing:0.000px;transform:scaleX(0.9346);transform-origin:0 0;-webkit-text-stroke:0.20px #384551;">SERVER NAME</div>
<div class="t" style="left:1439.00px;top:240.27px;font-size:14px;line-height:20px;color:#384551;font-weight:400;font-family:'Liberation Sans', sans-serif;letter-spacing:0.000px;transform:scaleX(0.9220);transform-origin:0 0;-webkit-text-stroke:0.20px #384551;">DATA</div>
<div class="t" style="left:1652.40px;top:240.27px;font-size:14px;line-height:20px;color:#384551;font-weight:400;font-family:'Liberation Sans', sans-serif;letter-spacing:0.000px;transform:scaleX(0.9285);transform-origin:0 0;-webkit-text-stroke:0.20px #384551;">ACTIONS</div>
<div class="r" style="left:313px;top:337.4px;width:1538px;height:1px;background:#e4e6e8;"></div>
<div class="r" style="left:332.8px;top:302.6px;width:12.5px;height:12.5px;border:1.2px solid #6d7781;border-radius:3px;background:#fff;"></div>
<div class="t" style="left:421.30px;top:297.56px;font-size:15.5px;line-height:22px;color:#646e78;font-weight:400;font-family:'Liberation Sans', sans-serif;letter-spacing:-0.113px;">11/09/2025, 12:03:49</div>
<svg class="r" style="left:734px;top:302.0px;" width="23" height="15" viewBox="0 0 23 15"><rect x=".7" y=".7" width="21.6" height="13.6" fill="#fff" stroke="#0f5a80" stroke-width="1.4"/><path d="M1 14L22 1" stroke="#0f5a80" stroke-width="1.3"/></svg>
<div class="r" style="left:771px;top:308px;width:11px;height:1px;background:#5f6973;box-shadow:0 .5px 0 rgba(100,110,120,.35);"></div>
<div class="t" style="left:788.50px;top:297.56px;font-size:15.5px;line-height:22px;color:#646e78;font-weight:400;font-family:'Liberation Sans', sans-serif;letter-spacing:-0.175px;">N/A</div>
<div class="t" style="left:940.00px;top:297.56px;font-size:15.5px;line-height:22px;color:#646e78;font-weight:400;font-family:'Liberation Sans', sans-serif;letter-spacing:0.000px;transform:scaleX(1.0698);transform-origin:0 0;">blacklist</div>
<div class="t" style="left:1155.00px;top:297.56px;font-size:15.5px;line-height:22px;color:#646e78;font-weight:400;font-family:'Liberation Sans', sans-serif;letter-spacing:0.000px;transform:scaleX(0.9675);transform-origin:0 0;">app1.example.com</div>
<div class="t" style="left:1439.00px;top:297.56px;font-size:15.5px;line-height:22px;color:#0b3550;font-weight:400;font-family:'Liberation Sans', sans-serif;letter-spacing:0.073px;-webkit-text-stroke:0.12px #0b3550;">View Details</div>
<div class="r" style="left:1439px;top:316px;width:86px;height:1px;background:#0b3550;"></div>
<div class="r" style="left:1652px;top:292.2px;width:42px;height:31.6px;border:1px solid #ff3e1d;border-radius:5px;background:#fff;"></div>
<svg class="r" style="left:1665px;top:300.5px;" width="15" height="15" viewBox="0 0 15 15"><circle cx="7.5" cy="7.5" r="5.8" fill="none" stroke="#ff3e1d" stroke-width="1.35"/><path d="M3.4 3.4l8.2 8.2" stroke="#ff3e1d" stroke-width="1.35"/></svg>
<div class="r" style="left:1706px;top:292.2px;width:125px;height:31.6px;background:linear-gradient(100deg,#0b3550 0%,#0d4868 65%,#0e5476 100%);border-radius:8px;box-shadow:0 2px 4px rgba(11,53,80,.2),inset 0 1px 0 rgba(255,255,255,.16);"></div>
<svg class="r" style="left:1722px;top:302.5px;" width="14" height="11" viewBox="0 0 14 11"><circle cx="4.8" cy="3" r="2.3" fill="none" stroke="#fff" stroke-width="1.2"/><path d="M.8 10.5q.3-4 4-4t4 4" fill="none" stroke="#fff" stroke-width="1.2"/><path d="M10 4l3 3M13 4l-3 3" stroke="#fff" stroke-width="1.1"/></svg>
<div class="t" style="left:1741.50px;top:301.04px;font-size:11px;line-height:15px;color:#fff;font-weight:400;font-family:'Liberation Mono', monospace;letter-spacing:0.000px;transform:scaleX(1.2229);transform-origin:0 0;-webkit-text-stroke:0.25px #fff;">Resolve</div>
<svg class="r" style="left:1808px;top:302.5px;" width="3" height="11" viewBox="0 0 3 11"><circle cx="1.5" cy="1.5" r="1.3" fill="#fff"/><circle cx="1.5" cy="5.5" r="1.3" fill="#fff"/><circle cx="1.5" cy="9.5" r="1.3" fill="#fff"/></svg>
<div class="r" style="left:313px;top:395.84px;width:1538px;height:1px;background:#e4e6e8;"></div>
<div class="r" style="left:332.8px;top:361.04px;width:12.5px;height:12.5px;border:1.2px solid #6d7781;border-radius:3px;background:#fff;"></div>
<div class="t" style="left:421.30px;top:356.00px;font-size:15.5px;line-height:22px;color:#646e78;font-weight:400;font-family:'Liberation Sans', sans-serif;letter-spacing:-0.113px;">11/09/2025, 12:03:37</div>
<svg class="r" style="left:734px;top:360.44px;" width="23" height="15" viewBox="0 0 23 15"><rect x=".7" y=".7" width="21.6" height="13.6" fill="#fff" stroke="#0f5a80" stroke-width="1.4"/><path d="M1 14L22 1" stroke="#0f5a80" stroke-width="1.3"/></svg>
<div class="r" style="left:771px;top:366px;width:11px;height:1px;background:#5f6973;box-shadow:0 .5px 0 rgba(100,110,120,.35);"></div>
<div class="t" style="left:788.50px;top:356.00px;font-size:15.5px;line-height:22px;color:#646e78;font-weight:400;font-family:'Liberation Sans', sans-serif;letter-spacing:-0.175px;">N/A</div>
<div class="t" style="left:940.00px;top:356.00px;font-size:15.5px;line-height:22px;color:#646e78;font-weight:400;font-family:'Liberation Sans', sans-serif;letter-spacing:0.000px;transform:scaleX(1.0698);transform-origin:0 0;">blacklist</div>
<div class="t" style="left:1155.00px;top:356.00px;font-size:15.5px;line-height:22px;color:#646e78;font-weight:400;font-family:'Liberation Sans', sans-serif;letter-spacing:0.000px;transform:scaleX(0.9675);transform-origin:0 0;">app1.example.com</div>
<div class="t" style="left:1439.00px;top:356.00px;font-size:15.5px;line-height:22px;color:#0b3550;font-weight:400;font-family:'Liberation Sans', sans-serif;letter-spacing:0.073px;-webkit-text-stroke:0.12px #0b3550;">View Details</div>
<div class="r" style="left:1439px;top:375px;width:86px;height:1px;background:#0b3550;"></div>
<div class="r" style="left:1652px;top:350.64px;width:42px;height:31.6px;border:1px solid #ff3e1d;border-radius:5px;background:#fff;"></div>
<svg class="r" style="left:1665px;top:358.94px;" width="15" height="15" viewBox="0 0 15 15"><circle cx="7.5" cy="7.5" r="5.8" fill="none" stroke="#ff3e1d" stroke-width="1.35"/><path d="M3.4 3.4l8.2 8.2" stroke="#ff3e1d" stroke-width="1.35"/></svg>
<div class="r" style="left:1706px;top:350.64px;width:125px;height:31.6px;background:linear-gradient(100deg,#0b3550 0%,#0d4868 65%,#0e5476 100%);border-radius:8px;box-shadow:0 2px 4px rgba(11,53,80,.2),inset 0 1px 0 rgba(255,255,255,.16);"></div>
<svg class="r" style="left:1722px;top:360.94px;" width="14" height="11" viewBox="0 0 14 11"><circle cx="4.8" cy="3" r="2.3" fill="none" stroke="#fff" stroke-width="1.2"/><path d="M.8 10.5q.3-4 4-4t4 4" fill="none" stroke="#fff" stroke-width="1.2"/><path d="M10 4l3 3M13 4l-3 3" stroke="#fff" stroke-width="1.1"/></svg>
<div class="t" style="left:1741.50px;top:359.48px;font-size:11px;line-height:15px;color:#fff;font-weight:400;font-family:'Liberation Mono', monospace;letter-spacing:0.000px;transform:scaleX(1.2229);transform-origin:0 0;-webkit-text-stroke:0.25px #fff;">Resolve</div>
<svg class="r" style="left:1808px;top:360.94px;" width="3" height="11" viewBox="0 0 3 11"><circle cx="1.5" cy="1.5" r="1.3" fill="#fff"/><circle cx="1.5" cy="5.5" r="1.3" fill="#fff"/><circle cx="1.5" cy="9.5" r="1.3" fill="#fff"/></svg>
<div class="r" style="left:313px;top:454.28px;width:1538px;height:1px;background:#e4e6e8;"></div>
<div class="r" style="left:332.8px;top:419.48px;width:12.5px;height:12.5px;border:1.2px solid #6d7781;border-radius:3px;background:#fff;"></div>
<div class="t" style="left:421.30px;top:414.44px;font-size:15.5px;line-height:22px;color:#646e78;font-weight:400;font-family:'Liberation Sans', sans-serif;letter-spacing:-0.113px;">11/09/2025, 12:03:12</div>
<svg class="r" style="left:734px;top:418.38px;" width="20" height="15" viewBox="0 0 20 15"><rect width="6.7" height="15" fill="#0a1d8f"/><rect x="6.7" width="6.6" height="15" fill="#f2f2f5"/><rect x="13.3" width="6.7" height="15" fill="#e1141c"/></svg>
<div class="r" style="left:768px;top:425px;width:11px;height:1px;background:#5f6973;box-shadow:0 .5px 0 rgba(100,110,120,.35);"></div>
<div class="t" style="left:785.50px;top:414.44px;font-size:15.5px;line-height:22px;color:#646e78;font-weight:400;font-family:'Liberation Sans', sans-serif;letter-spacing:0.000px;transform:scaleX(0.9443);transform-origin:0 0;">FR</div>
<div class="t" style="left:940.00px;top:414.44px;font-size:15.5px;line-height:22px;color:#646e78;font-weight:400;font-family:'Liberation Sans', sans-serif;letter-spacing:0.000px;transform:scaleX(1.0317);transform-origin:0 0;">modsecurity</div>
<div class="t" style="left:1155.00px;top:414.44px;font-size:15.5px;line-height:22px;color:#646e78;font-weight:400;font-family:'Liberation Sans', sans-serif;letter-spacing:0.000px;transform:scaleX(0.9675);transform-origin:0 0;">app1.example.com</div>
<div class="t" style="left:1439.00px;top:414.44px;font-size:15.5px;line-height:22px;color:#0b3550;font-weight:400;font-family:'Liberation Sans', sans-serif;letter-spacing:0.073px;-webkit-text-stroke:0.12px #0b3550;">View Details</div>
<div class="r" style="left:1439px;top:433px;width:86px;height:1px;background:#0b3550;"></div>
<div class="r" style="left:1652px;top:409.08px;width:42px;height:31.6px;border:1px solid #ff3e1d;border-radius:5px;background:#fff;"></div>
<svg class="r" style="left:1665px;top:417.38px;" width="15" height="15" viewBox="0 0 15 15"><circle cx="7.5" cy="7.5" r="5.8" fill="none" stroke="#ff3e1d" stroke-width="1.35"/><path d="M3.4 3.4l8.2 8.2" stroke="#ff3e1d" stroke-width="1.35"/></svg>
<div class="r" style="left:1706px;top:409.08px;width:125px;height:31.6px;background:linear-gradient(100deg,#0b3550 0%,#0d4868 65%,#0e5476 100%);border-radius:8px;box-shadow:0 2px 4px rgba(11,53,80,.2),inset 0 1px 0 rgba(255,255,255,.16);"></div>
<svg class="r" style="left:1723px;top:417.88px;" width="12" height="14" viewBox="0 0 12 14"><path d="M6 .8l5 2v4q0 4-5 6.2Q1 10.8 1 6.8v-4z" fill="none" stroke="#fff" stroke-width="1.3"/><path d="M6 4.5v4.5M3.8 6.8h4.4" stroke="#fff" stroke-width="1.3"/></svg>
<div class="t" style="left:1741.50px;top:417.92px;font-size:11px;line-height:15px;color:#fff;font-weight:400;font-family:'Liberation Mono', monospace;letter-spacing:0.000px;transform:scaleX(1.2229);transform-origin:0 0;-webkit-text-stroke:0.25px #fff;">Resolve</div>
<svg class="r" style="left:1808px;top:419.38px;" width="3" height="11" viewBox="0 0 3 11"><circle cx="1.5" cy="1.5" r="1.3" fill="#fff"/><circle cx="1.5" cy="5.5" r="1.3" fill="#fff"/><circle cx="1.5" cy="9.5" r="1.3" fill="#fff"/></svg>
<div class="r" style="left:313px;top:512.72px;width:1538px;height:1px;background:#e4e6e8;"></div>
<div class="r" style="left:332.8px;top:477.92px;width:12.5px;height:12.5px;border:1.2px solid #6d7781;border-radius:3px;background:#fff;"></div>
<div class="t" style="left:421.30px;top:472.88px;font-size:15.5px;line-height:22px;color:#646e78;font-weight:400;font-family:'Liberation Sans', sans-serif;letter-spacing:-0.053px;">11/09/2025, 12:03:11</div>
<svg class="r" style="left:734px;top:476.82px;" width="20" height="15" viewBox="0 0 20 15"><rect width="20" height="15" fill="#f4f4f4"/><rect x="0" y="0.000" width="20" height="1.154" fill="#c9414e"/><rect x="0" y="2.308" width="20" height="1.154" fill="#c9414e"/><rect x="0" y="4.615" width="20" height="1.154" fill="#c9414e"/><rect x="0" y="6.923" width="20" height="1.154" fill="#c9414e"/><rect x="0" y="9.231" width="20" height="1.154" fill="#c9414e"/><rect x="0" y="11.538" width="20" height="1.154" fill="#c9414e"/><rect x="0" y="13.846" width="20" height="1.154" fill="#c9414e"/><rect width="9.00" height="8.08" fill="#2d3e6e"/></svg>
<div class="r" style="left:768px;top:483px;width:11px;height:1px;background:#5f6973;box-shadow:0 .5px 0 rgba(100,110,120,.35);"></div>
<div class="t" style="left:785.50px;top:472.88px;font-size:15.5px;line-height:22px;color:#646e78;font-weight:400;font-family:'Liberation Sans', sans-serif;letter-spacing:0.000px;transform:scaleX(0.9049);transform-origin:0 0;">US</div>
<div class="t" style="left:940.00px;top:472.88px;font-size:15.5px;line-height:22px;color:#646e78;font-weight:400;font-family:'Liberation Sans', sans-serif;letter-spacing:0.000px;transform:scaleX(1.0317);transform-origin:0 0;">modsecurity</div>
<div class="t" style="left:1155.00px;top:472.88px;font-size:15.5px;line-height:22px;color:#646e78;font-weight:400;font-family:'Liberation Sans', sans-serif;letter-spacing:0.000px;transform:scaleX(0.9675);transform-origin:0 0;">app1.example.com</div>
<div class="t" style="left:1439.00px;top:472.88px;font-size:15.5px;line-height:22px;color:#0b3550;font-weight:400;font-family:'Liberation Sans', sans-serif;letter-spacing:0.073px;-webkit-text-stroke:0.12px #0b3550;">View Details</div>
<div class="r" style="left:1439px;top:492px;width:86px;height:1px;background:#0b3550;"></div>
<div class="r" style="left:1652px;top:467.52px;width:42px;height:31.6px;border:1px solid #ff3e1d;border-radius:5px;background:#fff;"></div>
<svg class="r" style="left:1665px;top:475.82px;" width="15" height="15" viewBox="0 0 15 15"><circle cx="7.5" cy="7.5" r="5.8" fill="none" stroke="#ff3e1d" stroke-width="1.35"/><path d="M3.4 3.4l8.2 8.2" stroke="#ff3e1d" stroke-width="1.35"/></svg>
<div class="r" style="left:1706px;top:467.52px;width:125px;height:31.6px;background:linear-gradient(100deg,#0b3550 0%,#0d4868 65%,#0e5476 100%);border-radius:8px;box-shadow:0 2px 4px rgba(11,53,80,.2),inset 0 1px 0 rgba(255,255,255,.16);"></div>
<svg class="r" style="left:1723px;top:476.32px;" width="12" height="14" viewBox="0 0 12 14"><path d="M6 .8l5 2v4q0 4-5 6.2Q1 10.8 1 6.8v-4z" fill="none" stroke="#fff" stroke-width="1.3"/><path d="M6 4.5v4.5M3.8 6.8h4.4" stroke="#fff" stroke-width="1.3"/></svg>
<div class="t" style="left:1741.50px;top:476.36px;font-size:11px;line-height:15px;color:#fff;font-weight:400;font-family:'Liberation Mono', monospace;letter-spacing:0.000px;transform:scaleX(1.2229);transform-origin:0 0;-webkit-text-stroke:0.25px #fff;">Resolve</div>
<svg class="r" style="left:1808px;top:477.82px;" width="3" height="11" viewBox="0 0 3 11"><circle cx="1.5" cy="1.5" r="1.3" fill="#fff"/><circle cx="1.5" cy="5.5" r="1.3" fill="#fff"/><circle cx="1.5" cy="9.5" r="1.3" fill="#fff"/></svg>
<div class="r" style="left:313px;top:571.16px;width:1538px;height:1px;background:#e4e6e8;"></div>
<div class="r" style="left:332.8px;top:536.36px;width:12.5px;height:12.5px;border:1.2px solid #6d7781;border-radius:3px;background:#fff;"></div>
<div class="t" style="left:421.30px;top:531.32px;font-size:15.5px;line-height:22px;color:#646e78;font-weight:400;font-family:'Liberation Sans', sans-serif;letter-spacing:-0.053px;">11/09/2025, 12:03:11</div>
<svg class="r" style="left:734px;top:535.76px;" width="23" height="15" viewBox="0 0 23 15"><rect x=".7" y=".7" width="21.6" height="13.6" fill="#fff" stroke="#0f5a80" stroke-width="1.4"/><path d="M1 14L22 1" stroke="#0f5a80" stroke-width="1.3"/></svg>
<div class="r" style="left:771px;top:542px;width:11px;height:1px;background:#5f6973;box-shadow:0 .5px 0 rgba(100,110,120,.35);"></div>
<div class="t" style="left:788.50px;top:531.32px;font-size:15.5px;line-height:22px;color:#646e78;font-weight:400;font-family:'Liberation Sans', sans-serif;letter-spacing:-0.175px;">N/A</div>
<div class="t" style="left:940.00px;top:531.32px;font-size:15.5px;line-height:22px;color:#646e78;font-weight:400;font-family:'Liberation Sans', sans-serif;letter-spacing:0.000px;transform:scaleX(1.0317);transform-origin:0 0;">modsecurity</div>
<div class="t" style="left:1155.00px;top:531.32px;font-size:15.5px;line-height:22px;color:#646e78;font-weight:400;font-family:'Liberation Sans', sans-serif;letter-spacing:0.000px;transform:scaleX(0.9675);transform-origin:0 0;">app1.example.com</div>
<div class="t" style="left:1439.00px;top:531.32px;font-size:15.5px;line-height:22px;color:#0b3550;font-weight:400;font-family:'Liberation Sans', sans-serif;letter-spacing:0.073px;-webkit-text-stroke:0.12px #0b3550;">View Details</div>
<div class="r" style="left:1439px;top:550px;width:86px;height:1px;background:#0b3550;"></div>
<div class="r" style="left:1652px;top:525.96px;width:42px;height:31.6px;border:1px solid #ff3e1d;border-radius:5px;background:#fff;"></div>
<svg class="r" style="left:1665px;top:534.26px;" width="15" height="15" viewBox="0 0 15 15"><circle cx="7.5" cy="7.5" r="5.8" fill="none" stroke="#ff3e1d" stroke-width="1.35"/><path d="M3.4 3.4l8.2 8.2" stroke="#ff3e1d" stroke-width="1.35"/></svg>
<div class="r" style="left:1706px;top:525.96px;width:125px;height:31.6px;background:linear-gradient(100deg,#0b3550 0%,#0d4868 65%,#0e5476 100%);border-radius:8px;box-shadow:0 2px 4px rgba(11,53,80,.2),inset 0 1px 0 rgba(255,255,255,.16);"></div>
<svg class="r" style="left:1723px;top:534.76px;" width="12" height="14" viewBox="0 0 12 14"><path d="M6 .8l5 2v4q0 4-5 6.2Q1 10.8 1 6.8v-4z" fill="none" stroke="#fff" stroke-width="1.3"/><path d="M6 4.5v4.5M3.8 6.8h4.4" stroke="#fff" stroke-width="1.3"/></svg>
<div class="t" style="left:1741.50px;top:534.80px;font-size:11px;line-height:15px;color:#fff;font-weight:400;font-family:'Liberation Mono', monospace;letter-spacing:0.000px;transform:scaleX(1.2229);transform-origin:0 0;-webkit-text-stroke:0.25px #fff;">Resolve</div>
<svg class="r" style="left:1808px;top:536.26px;" width="3" height="11" viewBox="0 0 3 11"><circle cx="1.5" cy="1.5" r="1.3" fill="#fff"/><circle cx="1.5" cy="5.5" r="1.3" fill="#fff"/><circle cx="1.5" cy="9.5" r="1.3" fill="#fff"/></svg>
<div class="r" style="left:313px;top:629.5999999999999px;width:1538px;height:1px;background:#e4e6e8;"></div>
<div class="r" style="left:332.8px;top:594.8000000000001px;width:12.5px;height:12.5px;border:1.2px solid #6d7781;border-radius:3px;background:#fff;"></div>
<div class="t" style="left:421.30px;top:589.76px;font-size:15.5px;line-height:22px;color:#646e78;font-weight:400;font-family:'Liberation Sans', sans-serif;letter-spacing:-0.053px;">11/09/2025, 12:03:11</div>
<svg class="r" style="left:734px;top:593.7px;" width="20" height="15" viewBox="0 0 20 15"><rect width="20" height="15" fill="#f4f4f4"/><rect x="0" y="0.000" width="20" height="1.154" fill="#c9414e"/><rect x="0" y="2.308" width="20" height="1.154" fill="#c9414e"/><rect x="0" y="4.615" width="20" height="1.154" fill="#c9414e"/><rect x="0" y="6.923" width="20" height="1.154" fill="#c9414e"/><rect x="0" y="9.231" width="20" height="1.154" fill="#c9414e"/><rect x="0" y="11.538" width="20" height="1.154" fill="#c9414e"/><rect x="0" y="13.846" width="20" height="1.154" fill="#c9414e"/><rect width="9.00" height="8.08" fill="#2d3e6e"/></svg>
<div class="r" style="left:768px;top:600px;width:11px;height:1px;background:#5f6973;box-shadow:0 .5px 0 rgba(100,110,120,.35);"></div>
<div class="t" style="left:785.50px;top:589.76px;font-size:15.5px;line-height:22px;color:#646e78;font-weight:400;font-family:'Liberation Sans', sans-serif;letter-spacing:0.000px;transform:scaleX(0.9049);transform-origin:0 0;">US</div>
<div class="t" style="left:940.00px;top:589.76px;font-size:15.5px;line-height:22px;color:#646e78;font-weight:400;font-family:'Liberation Sans', sans-serif;letter-spacing:0.000px;transform:scaleX(1.0317);transform-origin:0 0;">modsecurity</div>
<div class="t" style="left:1155.00px;top:589.76px;font-size:15.5px;line-height:22px;color:#646e78;font-weight:400;font-family:'Liberation Sans', sans-serif;letter-spacing:0.000px;transform:scaleX(0.9675);transform-origin:0 0;">app1.example.com</div>
<div class="t" style="left:1439.00px;top:589.76px;font-size:15.5px;line-height:22px;color:#0b3550;font-weight:400;font-family:'Liberation Sans', sans-serif;letter-spacing:0.073px;-webkit-text-stroke:0.12px #0b3550;">View Details</div>
<div class="r" style="left:1439px;top:608px;width:86px;height:1px;background:#0b3550;"></div>
<div class="r" style="left:1652px;top:584.4000000000001px;width:42px;height:31.6px;border:1px solid #ff3e1d;border-radius:5px;background:#fff;"></div>
<svg class="r" style="left:1665px;top:592.7px;" width="15" height="15" viewBox="0 0 15 15"><circle cx="7.5" cy="7.5" r="5.8" fill="none" stroke="#ff3e1d" stroke-width="1.35"/><path d="M3.4 3.4l8.2 8.2" stroke="#ff3e1d" stroke-width="1.35"/></svg>
<div class="r" style="left:1706px;top:584.4000000000001px;width:125px;height:31.6px;background:linear-gradient(100deg,#0b3550 0%,#0d4868 65%,#0e5476 100%);border-radius:8px;box-shadow:0 2px 4px rgba(11,53,80,.2),inset 0 1px 0 rgba(255,255,255,.16);"></div>
<svg class="r" style="left:1723px;top:593.2px;" width="12" height="14" viewBox="0 0 12 14"><path d="M6 .8l5 2v4q0 4-5 6.2Q1 10.8 1 6.8v-4z" fill="none" stroke="#fff" stroke-width="1.3"/><path d="M6 4.5v4.5M3.8 6.8h4.4" stroke="#fff" stroke-width="1.3"/></svg>
<div class="t" style="left:1741.50px;top:593.24px;font-size:11px;line-height:15px;color:#fff;font-weight:400;font-family:'Liberation Mono', monospace;letter-spacing:0.000px;transform:scaleX(1.2229);transform-origin:0 0;-webkit-text-stroke:0.25px #fff;">Resolve</div>
<svg class="r" style="left:1808px;top:594.7px;" width="3" height="11" viewBox="0 0 3 11"><circle cx="1.5" cy="1.5" r="1.3" fill="#fff"/><circle cx="1.5" cy="5.5" r="1.3" fill="#fff"/><circle cx="1.5" cy="9.5" r="1.3" fill="#fff"/></svg>
<div class="r" style="left:313px;top:688.04px;width:1538px;height:1px;background:#e4e6e8;"></div>
<div class="r" style="left:332.8px;top:653.24px;width:12.5px;height:12.5px;border:1.2px solid #6d7781;border-radius:3px;background:#fff;"></div>
<div class="t" style="left:421.30px;top:648.20px;font-size:15.5px;line-height:22px;color:#646e78;font-weight:400;font-family:'Liberation Sans', sans-serif;letter-spacing:-0.113px;">11/09/2025, 12:03:10</div>
<svg class="r" style="left:734px;top:652.14px;" width="20" height="15" viewBox="0 0 20 15"><rect width="20" height="15" fill="#229e45"/><path d="M10 1.8L18.2 7.5 10 13.2 1.8 7.5z" fill="#f8e509"/><circle cx="10" cy="7.5" r="3.4" fill="#2b49a3"/><path d="M6.8 6.8q3.5-.8 6.5 1.3" stroke="#fff" stroke-width=".6" fill="none"/></svg>
<div class="r" style="left:768px;top:659px;width:11px;height:1px;background:#5f6973;box-shadow:0 .5px 0 rgba(100,110,120,.35);"></div>
<div class="t" style="left:785.50px;top:648.20px;font-size:15.5px;line-height:22px;color:#646e78;font-weight:400;font-family:'Liberation Sans', sans-serif;letter-spacing:0.000px;transform:scaleX(0.9049);transform-origin:0 0;">BR</div>
<div class="t" style="left:940.00px;top:648.20px;font-size:15.5px;line-height:22px;color:#646e78;font-weight:400;font-family:'Liberation Sans', sans-serif;letter-spacing:0.000px;transform:scaleX(1.0317);transform-origin:0 0;">modsecurity</div>
<div class="t" style="left:1155.00px;top:648.20px;font-size:15.5px;line-height:22px;color:#646e78;font-weight:400;font-family:'Liberation Sans', sans-serif;letter-spacing:0.000px;transform:scaleX(0.9675);transform-origin:0 0;">app1.example.com</div>
<div class="t" style="left:1439.00px;top:648.20px;font-size:15.5px;line-height:22px;color:#0b3550;font-weight:400;font-family:'Liberation Sans', sans-serif;letter-spacing:0.073px;-webkit-text-stroke:0.12px #0b3550;">View Details</div>
<div class="r" style="left:1439px;top:667px;width:86px;height:1px;background:#0b3550;"></div>
<div class="r" style="left:1652px;top:642.84px;width:42px;height:31.6px;border:1px solid #ff3e1d;border-radius:5px;background:#fff;"></div>
<svg class="r" style="left:1665px;top:651.14px;" width="15" height="15" viewBox="0 0 15 15"><circle cx="7.5" cy="7.5" r="5.8" fill="none" stroke="#ff3e1d" stroke-width="1.35"/><path d="M3.4 3.4l8.2 8.2" stroke="#ff3e1d" stroke-width="1.35"/></svg>
<div class="r" style="left:1706px;top:642.84px;width:125px;height:31.6px;background:linear-gradient(100deg,#0b3550 0%,#0d4868 65%,#0e5476 100%);border-radius:8px;box-shadow:0 2px 4px rgba(11,53,80,.2),inset 0 1px 0 rgba(255,255,255,.16);"></div>
<svg class="r" style="left:1723px;top:651.64px;" width="12" height="14" viewBox="0 0 12 14"><path d="M6 .8l5 2v4q0 4-5 6.2Q1 10.8 1 6.8v-4z" fill="none" stroke="#fff" stroke-width="1.3"/><path d="M6 4.5v4.5M3.8 6.8h4.4" stroke="#fff" stroke-width="1.3"/></svg>
<div class="t" style="left:1741.50px;top:651.68px;font-size:11px;line-height:15px;color:#fff;font-weight:400;font-family:'Liberation Mono', monospace;letter-spacing:0.000px;transform:scaleX(1.2229);transform-origin:0 0;-webkit-text-stroke:0.25px #fff;">Resolve</div>
<svg class="r" style="left:1808px;top:653.14px;" width="3" height="11" viewBox="0 0 3 11"><circle cx="1.5" cy="1.5" r="1.3" fill="#fff"/><circle cx="1.5" cy="5.5" r="1.3" fill="#fff"/><circle cx="1.5" cy="9.5" r="1.3" fill="#fff"/></svg>
<div class="r" style="left:313px;top:746.48px;width:1538px;height:1px;background:#e4e6e8;"></div>
<div class="r" style="left:332.8px;top:711.68px;width:12.5px;height:12.5px;border:1.2px solid #6d7781;border-radius:3px;background:#fff;"></div>
<div class="t" style="left:421.30px;top:706.64px;font-size:15.5px;line-height:22px;color:#646e78;font-weight:400;font-family:'Liberation Sans', sans-serif;letter-spacing:-0.113px;">11/09/2025, 12:02:57</div>
<svg class="r" style="left:734px;top:710.5799999999999px;" width="20" height="15" viewBox="0 0 20 15"><rect width="20" height="15" fill="#f4f4f4"/><rect x="0" y="0.000" width="20" height="1.154" fill="#c9414e"/><rect x="0" y="2.308" width="20" height="1.154" fill="#c9414e"/><rect x="0" y="4.615" width="20" height="1.154" fill="#c9414e"/><rect x="0" y="6.923" width="20" height="1.154" fill="#c9414e"/><rect x="0" y="9.231" width="20" height="1.154" fill="#c9414e"/><rect x="0" y="11.538" width="20" height="1.154" fill="#c9414e"/><rect x="0" y="13.846" width="20" height="1.154" fill="#c9414e"/><rect width="9.00" height="8.08" fill="#2d3e6e"/></svg>
<div class="r" style="left:768px;top:717px;width:11px;height:1px;background:#5f6973;box-shadow:0 .5px 0 rgba(100,110,120,.35);"></div>
<div class="t" style="left:785.50px;top:706.64px;font-size:15.5px;line-height:22px;color:#646e78;font-weight:400;font-family:'Liberation Sans', sans-serif;letter-spacing:0.000px;transform:scaleX(0.9049);transform-origin:0 0;">US</div>
<div class="t" style="left:940.00px;top:706.64px;font-size:15.5px;line-height:22px;color:#646e78;font-weight:400;font-family:'Liberation Sans', sans-serif;letter-spacing:0.000px;transform:scaleX(1.0698);transform-origin:0 0;">blacklist</div>
<div class="t" style="left:1155.00px;top:706.64px;font-size:15.5px;line-height:22px;color:#646e78;font-weight:400;font-family:'Liberation Sans', sans-serif;letter-spacing:0.000px;transform:scaleX(0.9675);transform-origin:0 0;">app1.example.com</div>
<div class="t" style="left:1439.00px;top:706.64px;font-size:15.5px;line-height:22px;color:#0b3550;font-weight:400;font-family:'Liberation Sans', sans-serif;letter-spacing:0.073px;-webkit-text-stroke:0.12px #0b3550;">View Details</div>
<div class="r" style="left:1439px;top:725px;width:86px;height:1px;background:#0b3550;"></div>
<div class="r" style="left:1652px;top:701.28px;width:42px;height:31.6px;border:1px solid #ff3e1d;border-radius:5px;background:#fff;"></div>
<svg class="r" style="left:1665px;top:709.5799999999999px;" width="15" height="15" viewBox="0 0 15 15"><circle cx="7.5" cy="7.5" r="5.8" fill="none" stroke="#ff3e1d" stroke-width="1.35"/><path d="M3.4 3.4l8.2 8.2" stroke="#ff3e1d" stroke-width="1.35"/></svg>
<div class="r" style="left:1706px;top:701.28px;width:125px;height:31.6px;background:linear-gradient(100deg,#0b3550 0%,#0d4868 65%,#0e5476 100%);border-radius:8px;box-shadow:0 2px 4px rgba(11,53,80,.2),inset 0 1px 0 rgba(255,255,255,.16);"></div>
<svg class="r" style="left:1722px;top:711.5799999999999px;" width="14" height="11" viewBox="0 0 14 11"><circle cx="4.8" cy="3" r="2.3" fill="none" stroke="#fff" stroke-width="1.2"/><path d="M.8 10.5q.3-4 4-4t4 4" fill="none" stroke="#fff" stroke-width="1.2"/><path d="M10 4l3 3M13 4l-3 3" stroke="#fff" stroke-width="1.1"/></svg>
<div class="t" style="left:1741.50px;top:710.12px;font-size:11px;line-height:15px;color:#fff;font-weight:400;font-family:'Liberation Mono', monospace;letter-spacing:0.000px;transform:scaleX(1.2229);transform-origin:0 0;-webkit-text-stroke:0.25px #fff;">Resolve</div>
<svg class="r" style="left:1808px;top:711.5799999999999px;" width="3" height="11" viewBox="0 0 3 11"><circle cx="1.5" cy="1.5" r="1.3" fill="#fff"/><circle cx="1.5" cy="5.5" r="1.3" fill="#fff"/><circle cx="1.5" cy="9.5" r="1.3" fill="#fff"/></svg>
<div class="r" style="left:313px;top:804.92px;width:1538px;height:1px;background:#e4e6e8;"></div>
<div class="r" style="left:332.8px;top:770.12px;width:12.5px;height:12.5px;border:1.2px solid #6d7781;border-radius:3px;background:#fff;"></div>
<div class="t" style="left:421.30px;top:765.08px;font-size:15.5px;line-height:22px;color:#646e78;font-weight:400;font-family:'Liberation Sans', sans-serif;letter-spacing:-0.113px;">11/09/2025, 12:02:55</div>
<svg class="r" style="left:734px;top:769.02px;" width="20" height="15" viewBox="0 0 20 15"><rect width="20" height="15" fill="#f4f4f4"/><rect x="0" y="0.000" width="20" height="1.154" fill="#c9414e"/><rect x="0" y="2.308" width="20" height="1.154" fill="#c9414e"/><rect x="0" y="4.615" width="20" height="1.154" fill="#c9414e"/><rect x="0" y="6.923" width="20" height="1.154" fill="#c9414e"/><rect x="0" y="9.231" width="20" height="1.154" fill="#c9414e"/><rect x="0" y="11.538" width="20" height="1.154" fill="#c9414e"/><rect x="0" y="13.846" width="20" height="1.154" fill="#c9414e"/><rect width="9.00" height="8.08" fill="#2d3e6e"/></svg>
<div class="r" style="left:768px;top:776px;width:11px;height:1px;background:#5f6973;box-shadow:0 .5px 0 rgba(100,110,120,.35);"></div>
<div class="t" style="left:785.50px;top:765.08px;font-size:15.5px;line-height:22px;color:#646e78;font-weight:400;font-family:'Liberation Sans', sans-serif;letter-spacing:0.000px;transform:scaleX(0.9049);transform-origin:0 0;">US</div>
<div class="t" style="left:940.00px;top:765.08px;font-size:15.5px;line-height:22px;color:#646e78;font-weight:400;font-family:'Liberation Sans', sans-serif;letter-spacing:0.000px;transform:scaleX(1.0698);transform-origin:0 0;">blacklist</div>
<div class="t" style="left:1155.00px;top:765.08px;font-size:15.5px;line-height:22px;color:#646e78;font-weight:400;font-family:'Liberation Sans', sans-serif;letter-spacing:0.000px;transform:scaleX(0.9675);transform-origin:0 0;">app1.example.com</div>
<div class="t" style="left:1439.00px;top:765.08px;font-size:15.5px;line-height:22px;color:#0b3550;font-weight:400;font-family:'Liberation Sans', sans-serif;letter-spacing:0.073px;-webkit-text-stroke:0.12px #0b3550;">View Details</div>
<div class="r" style="left:1439px;top:784px;width:86px;height:1px;background:#0b3550;"></div>
<div class="r" style="left:1652px;top:759.72px;width:42px;height:31.6px;border:1px solid #ff3e1d;border-radius:5px;background:#fff;"></div>
<svg class="r" style="left:1665px;top:768.02px;" width="15" height="15" viewBox="0 0 15 15"><circle cx="7.5" cy="7.5" r="5.8" fill="none" stroke="#ff3e1d" stroke-width="1.35"/><path d="M3.4 3.4l8.2 8.2" stroke="#ff3e1d" stroke-width="1.35"/></svg>
<div class="r" style="left:1706px;top:759.72px;width:125px;height:31.6px;background:linear-gradient(100deg,#0b3550 0%,#0d4868 65%,#0e5476 100%);border-radius:8px;box-shadow:0 2px 4px rgba(11,53,80,.2),inset 0 1px 0 rgba(255,255,255,.16);"></div>
<svg class="r" style="left:1722px;top:770.02px;" width="14" height="11" viewBox="0 0 14 11"><circle cx="4.8" cy="3" r="2.3" fill="none" stroke="#fff" stroke-width="1.2"/><path d="M.8 10.5q.3-4 4-4t4 4" fill="none" stroke="#fff" stroke-width="1.2"/><path d="M10 4l3 3M13 4l-3 3" stroke="#fff" stroke-width="1.1"/></svg>
<div class="t" style="left:1741.50px;top:768.56px;font-size:11px;line-height:15px;color:#fff;font-weight:400;font-family:'Liberation Mono', monospace;letter-spacing:0.000px;transform:scaleX(1.2229);transform-origin:0 0;-webkit-text-stroke:0.25px #fff;">Resolve</div>
<svg class="r" style="left:1808px;top:770.02px;" width="3" height="11" viewBox="0 0 3 11"><circle cx="1.5" cy="1.5" r="1.3" fill="#fff"/><circle cx="1.5" cy="5.5" r="1.3" fill="#fff"/><circle cx="1.5" cy="9.5" r="1.3" fill="#fff"/></svg>
<div class="r" style="left:313px;top:863.36px;width:1538px;height:1px;background:#e4e6e8;"></div>
<div class="r" style="left:332.8px;top:828.5600000000001px;width:12.5px;height:12.5px;border:1.2px solid #6d7781;border-radius:3px;background:#fff;"></div>
<div class="t" style="left:421.30px;top:823.52px;font-size:15.5px;line-height:22px;color:#646e78;font-weight:400;font-family:'Liberation Sans', sans-serif;letter-spacing:-0.113px;">11/09/2025, 12:02:51</div>
<svg class="r" style="left:734px;top:827.46px;" width="20" height="15" viewBox="0 0 20 15"><rect width="20" height="15" fill="#00247d"/><path d="M0 0L10 7.5M10 0L0 7.5" stroke="#fff" stroke-width="1.6"/><path d="M0 0L10 7.5M10 0L0 7.5" stroke="#cf142b" stroke-width=".6"/><path d="M5 0v7.5M0 3.75h10" stroke="#fff" stroke-width="2.2"/><path d="M5 0v7.5M0 3.75h10" stroke="#cf142b" stroke-width="1.2"/><circle cx="5" cy="11.5" r="1.3" fill="#fff"/><circle cx="15" cy="3.5" r=".7" fill="#fff"/><circle cx="13" cy="7" r=".7" fill="#fff"/><circle cx="17.2" cy="6.5" r=".7" fill="#fff"/><circle cx="15" cy="12" r=".8" fill="#fff"/></svg>
<div class="r" style="left:768px;top:834px;width:11px;height:1px;background:#5f6973;box-shadow:0 .5px 0 rgba(100,110,120,.35);"></div>
<div class="t" style="left:785.50px;top:823.52px;font-size:15.5px;line-height:22px;color:#646e78;font-weight:400;font-family:'Liberation Sans', sans-serif;letter-spacing:0.000px;transform:scaleX(0.9049);transform-origin:0 0;">AU</div>
<div class="t" style="left:940.00px;top:823.52px;font-size:15.5px;line-height:22px;color:#646e78;font-weight:400;font-family:'Liberation Sans', sans-serif;letter-spacing:0.000px;transform:scaleX(1.0698);transform-origin:0 0;">blacklist</div>
<div class="t" style="left:1155.00px;top:823.52px;font-size:15.5px;line-height:22px;color:#646e78;font-weight:400;font-family:'Liberation Sans', sans-serif;letter-spacing:0.000px;transform:scaleX(0.9675);transform-origin:0 0;">app1.example.com</div>
<div class="t" style="left:1439.00px;top:823.52px;font-size:15.5px;line-height:22px;color:#0b3550;font-weight:400;font-family:'Liberation Sans', sans-serif;letter-spacing:0.073px;-webkit-text-stroke:0.12px #0b3550;">View Details</div>
<div class="r" style="left:1439px;top:842px;width:86px;height:1px;background:#0b3550;"></div>
<div class="r" style="left:1652px;top:818.1600000000001px;width:42px;height:31.6px;border:1px solid #ff3e1d;border-radius:5px;background:#fff;"></div>
<svg class="r" style="left:1665px;top:826.46px;" width="15" height="15" viewBox="0 0 15 15"><circle cx="7.5" cy="7.5" r="5.8" fill="none" stroke="#ff3e1d" stroke-width="1.35"/><path d="M3.4 3.4l8.2 8.2" stroke="#ff3e1d" stroke-width="1.35"/></svg>
<div class="r" style="left:1706px;top:818.1600000000001px;width:125px;height:31.6px;background:linear-gradient(100deg,#0b3550 0%,#0d4868 65%,#0e5476 100%);border-radius:8px;box-shadow:0 2px 4px rgba(11,53,80,.2),inset 0 1px 0 rgba(255,255,255,.16);"></div>
<svg class="r" style="left:1722px;top:828.46px;" width="14" height="11" viewBox="0 0 14 11"><circle cx="4.8" cy="3" r="2.3" fill="none" stroke="#fff" stroke-width="1.2"/><path d="M.8 10.5q.3-4 4-4t4 4" fill="none" stroke="#fff" stroke-width="1.2"/><path d="M10 4l3 3M13 4l-3 3" stroke="#fff" stroke-width="1.1"/></svg>
<div class="t" style="left:1741.50px;top:827.00px;font-size:11px;line-height:15px;color:#fff;font-weight:400;font-family:'Liberation Mono', monospace;letter-spacing:0.000px;transform:scaleX(1.2229);transform-origin:0 0;-webkit-text-stroke:0.25px #fff;">Resolve</div>
<svg class="r" style="left:1808px;top:828.46px;" width="3" height="11" viewBox="0 0 3 11"><circle cx="1.5" cy="1.5" r="1.3" fill="#fff"/><circle cx="1.5" cy="5.5" r="1.3" fill="#fff"/><circle cx="1.5" cy="9.5" r="1.3" fill="#fff"/></svg>
<div class="t" style="left:313.00px;top:881.46px;font-size:15px;line-height:21px;color:#646e78;font-weight:400;font-family:'Liberation Sans', sans-serif;letter-spacing:0.000px;transform:scaleX(1.0366);transform-origin:0 0;">Display</div>
<div class="r" style="left:368px;top:878px;width:73px;height:30px;border:1px solid #d1d5db;border-radius:4px;background:#fff;"></div>
<div class="t" style="left:380.00px;top:883.47px;font-size:13.5px;line-height:19px;color:#384551;font-weight:400;font-family:'Liberation Sans', sans-serif;letter-spacing:0.000px;">10</div>
<svg class="r" style="left:410px;top:890px;" width="10" height="6" viewBox="0 0 10 6"><path d="M1 1l4 4 4-4" fill="none" stroke="#384551" stroke-width="1.6" stroke-linecap="round" stroke-linejoin="round"/></svg>
<div class="t" style="left:451.00px;top:881.46px;font-size:15px;line-height:21px;color:#646e78;font-weight:400;font-family:'Liberation Sans', sans-serif;letter-spacing:0.000px;transform:scaleX(1.0400);transform-origin:0 0;">Reports</div>
<div class="t" style="left:521.40px;top:882.46px;font-size:15px;line-height:21px;color:#646e78;font-weight:400;font-family:'Liberation Sans', sans-serif;letter-spacing:-0.021px;">Showing 1 to 10 of 10 Reports</div>
<div class="t" style="left:738.00px;top:882.46px;font-size:15px;line-height:21px;color:#646e78;font-weight:400;font-family:'Liberation Sans', sans-serif;letter-spacing:0.000px;transform:scaleX(1.0375);transform-origin:0 0;">No Reports selected</div>
<div class="r" style="left:1022px;top:910px;width:120px;height:24px;background:#35718f;border-radius:12px;"></div>
<div class="t" style="left:1032.00px;top:911.87px;font-size:14px;line-height:20px;color:#fff;font-weight:400;font-family:'Liberation Sans', sans-serif;letter-spacing:0.000px;transform:scaleX(0.9452);transform-origin:0 0;-webkit-text-stroke:0.10px #fff;">TZ: Europe/Paris</div>
<div class="r" style="left:1637px;top:874px;width:38px;height:38px;background:#f6f7f8;border-radius:50%;"></div>
<div class="t" style="left:1652.10px;top:882.97px;font-size:14px;line-height:20px;color:#a7acb2;font-weight:400;font-family:'Liberation Sans', sans-serif;letter-spacing:0.000px;">«</div>
<div class="r" style="left:1681px;top:874px;width:38px;height:38px;background:#f6f7f8;border-radius:50%;"></div>
<div class="t" style="left:1697.67px;top:882.97px;font-size:14px;line-height:20px;color:#a7acb2;font-weight:400;font-family:'Liberation Sans', sans-serif;letter-spacing:0.000px;">‹</div>
<div class="r" style="left:1725px;top:874px;width:38px;height:38px;background:#0b3550;border-radius:50%;box-shadow:0 2px 5px rgba(11,53,80,.3);"></div>
<div class="t" style="left:1739.55px;top:881.96px;font-size:16px;line-height:22px;color:#fff;font-weight:400;font-family:'Liberation Sans', sans-serif;letter-spacing:0.000px;">1</div>
<div class="r" style="left:1769px;top:874px;width:38px;height:38px;background:#f6f7f8;border-radius:50%;"></div>
<div class="t" style="left:1785.67px;top:882.97px;font-size:14px;line-height:20px;color:#a7acb2;font-weight:400;font-family:'Liberation Sans', sans-serif;letter-spacing:0.000px;">›</div>
<div class="r" style="left:1813px;top:874px;width:38px;height:38px;background:#f6f7f8;border-radius:50%;"></div>
<div class="t" style="left:1828.10px;top:882.97px;font-size:14px;line-height:20px;color:#a7acb2;font-weight:400;font-family:'Liberation Sans', sans-serif;letter-spacing:0.000px;">»</div>
<div class="t" style="left:388.00px;top:994.96px;font-size:15px;line-height:21px;color:#646e78;font-weight:400;font-family:'Liberation Sans', sans-serif;letter-spacing:0.227px;">© 2025, made by </div>
<div class="t" style="left:511.00px;top:994.96px;font-size:15px;line-height:21px;color:#0b3550;font-weight:400;font-family:'Liberation Sans', sans-serif;letter-spacing:0.000px;transform:scaleX(1.0711);transform-origin:0 0;">Bunkerity</div>
<div class="t" style="left:1398.50px;top:994.96px;font-size:15px;line-height:21px;color:#0b3550;font-weight:400;font-family:'Liberation Sans', sans-serif;letter-spacing:0.000px;transform:scaleX(1.0456);transform-origin:0 0;">Documentation</div>
<div class="t" style="left:1523.50px;top:994.96px;font-size:15px;line-height:21px;color:#0b3550;font-weight:400;font-family:'Liberation Sans', sans-serif;letter-spacing:0.000px;transform:scaleX(1.0467);transform-origin:0 0;">Privacy</div>
<div class="t" style="left:1594.00px;top:994.96px;font-size:15px;line-height:21px;color:#0b3550;font-weight:400;font-family:'Liberation Sans', sans-serif;letter-spacing:0.000px;transform:scaleX(1.0667);transform-origin:0 0;">Blog</div>
<div class="t" style="left:1645.00px;top:994.96px;font-size:15px;line-height:21px;color:#0b3550;font-weight:400;font-family:'Liberation Sans', sans-serif;letter-spacing:0.000px;transform:scaleX(1.0847);transform-origin:0 0;">Support</div>
<div class="t" style="left:1722.00px;top:994.96px;font-size:15px;line-height:21px;color:#0b3550;font-weight:400;font-family:'Liberation Sans', sans-serif;letter-spacing:0.000px;transform:scaleX(1.0445);transform-origin:0 0;">License</div>
</body></html>
